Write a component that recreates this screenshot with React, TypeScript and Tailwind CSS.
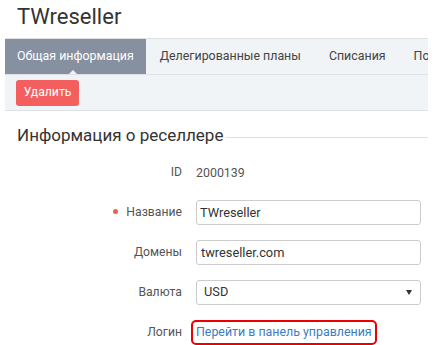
const tabs = ["Общая информация", "Делегированные планы", "Списания", "Подписки"];

function Row({ label, required, children }: { label: string; required?: boolean; children: React.ReactNode }) {
  return (
    <div className="flex items-center h-[40px]">
      <div className="w-[182px] flex items-center justify-end text-[12.2px] text-[#555]">
        {required && <span className="w-[5px] h-[5px] rounded-full bg-[#f0604d] mr-[8px]" />}
        {label}
      </div>
      <div className="ml-[14px] flex-1 mr-[13px]">{children}</div>
    </div>
  );
}

export default function App() {
  return (
    <div className="w-[434px] h-[345px] bg-white overflow-hidden font-['Roboto',sans-serif]">
      <h1 className="h-[38px] pl-[17px] pt-[1px] text-[22px] leading-[32px] text-[#333]">TWreseller</h1>

      <div className="ml-[5px] mr-[6px]">
        <div className="flex h-[37px] bg-[#f1f4f7] border-y border-[#dde1e6] overflow-hidden whitespace-nowrap">
          {tabs.map((t, i) => (
            <div
              key={t}
              className={
                i === 0
                  ? "relative flex items-center px-[12px] -mt-px -mb-px bg-[#8690a1] text-white text-[12.4px]"
                  : "flex items-center px-[14px] text-[12.4px] text-[#444]"
              }
            >
              {t}
              {i === 0 && (
                <span className="absolute left-[63px] bottom-0 w-0 h-0 border-x-[5px] border-x-transparent border-b-[5px] border-b-[#f1f4f7]" />
              )}
            </div>
          ))}
        </div>
        <div className="h-[36px] bg-[#f1f4f7] border-b border-[#dde1e6] flex items-center pl-[11px]">
          <button className="h-[26px] w-[63px] rounded-[3px] bg-[#f35f5f] text-white text-[12.2px]">Удалить</button>
        </div>
      </div>

      <div className="flex items-center pl-[17px] pr-[6px] mt-[10px] h-[30px]">
        <span className="text-[17px] text-[#333] whitespace-nowrap">Информация о реселлере</span>
        <span className="flex-1 h-px bg-[#dde1e6] ml-[3px] mt-[2px]" />
      </div>

      <div className="mt-[1px]">
        <Row label="ID">
          <span className="text-[12.4px] text-[#555]">2000139</span>
        </Row>
        <Row label="Название" required>
          <input
            readOnly
            value="TWreseller"
            className="w-full h-[25px] px-[3px] border border-[#ccc] rounded-[3px] text-[12.8px] text-[#333]"
          />
        </Row>
        <Row label="Домены">
          <input
            readOnly
            value="twreseller.com"
            className="w-full h-[25px] px-[4px] border border-[#ccc] rounded-[3px] text-[12.8px] text-[#333]"
          />
        </Row>
        <Row label="Валюта">
          <div className="w-full h-[25px] px-[7px] border border-[#ccc] rounded-[3px] flex items-center justify-between text-[12.8px] text-[#333]">
            USD
            <span className="w-0 h-0 border-x-[3px] border-x-transparent border-t-[5px] border-t-[#333] mr-[1px]" />
          </div>
        </Row>
        <Row label="Логин">
          <span className="-ml-[5px] -mt-[3px] inline-block px-[3px] py-[1px] border-2 border-[#e00] rounded-[5px] text-[12.4px] text-[#3b7dc0]">
            Перейти в панель управления
          </span>
        </Row>
      </div>
    </div>
  );
}
